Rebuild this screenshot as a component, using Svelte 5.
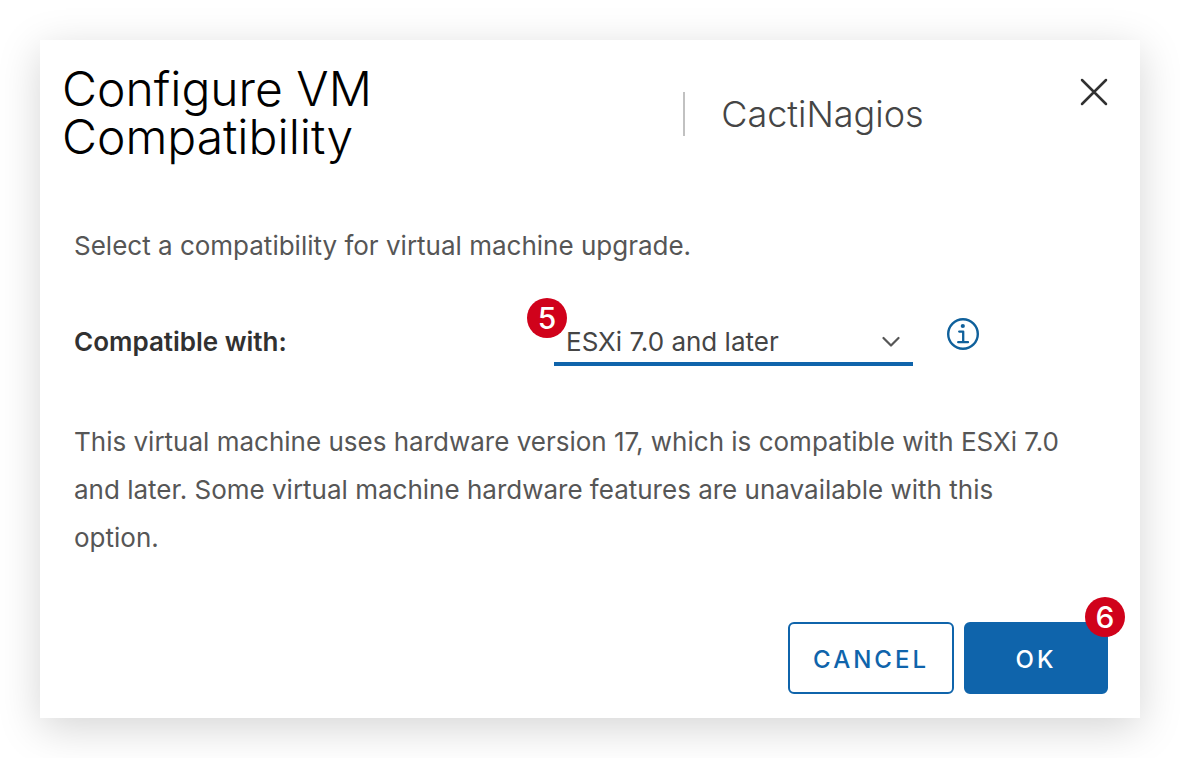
<script>
  let version = $state('ESXi 7.0 and later');
</script>

<main>
  <section class="dialog" role="dialog" aria-labelledby="dialog-title">
    <header>
      <h1 id="dialog-title">Configure VM Compatibility</h1>
      <p class="machine">CactiNagios</p>
      <button class="close" type="button" aria-label="Close">
        <svg width="28" height="28" viewBox="0 0 28 28" aria-hidden="true">
          <path d="M2 2 26 26M26 2 2 26" fill="none" stroke="#313131" stroke-width="2.5" stroke-linecap="round" />
        </svg>
      </button>
    </header>

    <div class="content">
      <p>Select a compatibility for virtual machine upgrade.</p>
      <div class="field">
        <label for="version">Compatible with:</label>
        <div class="picker">
          <select id="version" bind:value={version}>
            <option>ESXi 7.0 and later</option>
          </select>
          <svg class="chevron" width="18" height="12" viewBox="0 0 18 12" aria-hidden="true">
            <path d="M1.5 2 9 9.5 16.5 2" fill="none" stroke="#565656" stroke-width="2.2" stroke-linecap="round" stroke-linejoin="round" />
          </svg>
          <span class="badge step-select">5</span>
        </div>
        <button class="info" type="button" aria-label="Information">
          <svg width="32" height="32" viewBox="0 0 32 32" aria-hidden="true">
            <circle cx="16" cy="16" r="14.8" fill="none" stroke="#0f609b" stroke-width="2.4" />
            <circle cx="15.8" cy="8" r="2.1" fill="#0f609b" />
            <path d="M12.2 13.6H16.2V24M11.2 24.2H21" fill="none" stroke="#0f609b" stroke-width="2.3" stroke-linecap="round" stroke-linejoin="round" />
          </svg>
        </button>
      </div>
      <p>This virtual machine uses hardware version 17, which is compatible with ESXi 7.0 and later. Some virtual machine hardware features are unavailable with this option.</p>
    </div>

    <footer>
      <button class="action cancel" type="button">CANCEL</button>
      <div class="confirm">
        <button class="action ok" type="button">OK</button>
        <span class="badge step-ok">6</span>
      </div>
    </footer>
  </section>
</main>

<style>
  :global(body) {
    margin: 0;
    background: #fff;
  }

  main {
    padding: 40px;
    font-family: Inter, "Liberation Sans", sans-serif;
    color: #565656;
  }

  .dialog {
    background: #fff;
    box-shadow: 0 10px 40px rgba(0, 0, 0, 0.17);
    padding: 25px 32px 24px;
  }

  h1,
  p {
    margin: 0;
    font-weight: 400;
  }

  header {
    display: grid;
    grid-template-columns: 620fr 396fr 28px;
    margin-left: -10px;
  }

  h1 {
    padding-right: 160px;
    font-size: 48px;
    line-height: 48px;
    font-weight: 300;
    color: #000;
  }

  .machine {
    align-self: start;
    margin-top: 27px;
    padding-left: 36px;
    border-left: 2px solid #c1c1c1;
    font-size: 36px;
    line-height: 44px;
    font-weight: 300;
    color: #454545;
  }

  button {
    padding: 0;
    border: 0;
    background: none;
    font-family: inherit;
    cursor: pointer;
  }

  svg {
    display: block;
  }

  .close {
    align-self: start;
    margin-top: 13px;
  }

  .content {
    padding: 61px 32px 0 2px;
    font-size: 26px;
    line-height: 48px;
  }

  .field {
    display: grid;
    grid-template-columns: 480fr 359fr 163fr;
    align-items: center;
    margin: 48px 0 52px;
  }

  label {
    font-weight: 600;
    color: #313131;
  }

  .picker {
    position: relative;
  }

  select {
    display: block;
    width: 100%;
    height: 48px;
    padding: 0 40px 0 12px;
    border: 0;
    border-bottom: 4px solid #0f64ab;
    border-radius: 0;
    appearance: none;
    background: none;
    font: inherit;
    color: #454545;
  }

  .chevron {
    position: absolute;
    right: 13px;
    top: 18px;
    pointer-events: none;
  }

  .info {
    justify-self: start;
    align-self: start;
    margin-left: 34px;
  }

  .badge {
    position: absolute;
    width: 40px;
    height: 40px;
    border-radius: 50%;
    background: #d0021b;
    color: #fff;
    font: 500 30px/40px Inter, sans-serif;
    text-align: center;
  }

  .step-select {
    left: -27px;
    top: -20px;
  }

  footer {
    display: flex;
    justify-content: flex-end;
    gap: 10px;
    margin-top: 60px;
  }

  .action {
    height: 72px;
    padding: 2px 23px 0;
    border: 2px solid #0f64ab;
    border-radius: 6px;
    font-size: 24px;
    font-weight: 500;
    letter-spacing: 3px;
  }

  .cancel {
    color: #0f64ab;
  }

  .confirm {
    position: relative;
  }

  .ok {
    min-width: 144px;
    background: #0f64ab;
    color: #fff;
  }

  .step-ok {
    right: -17px;
    top: -25px;
  }
</style>
